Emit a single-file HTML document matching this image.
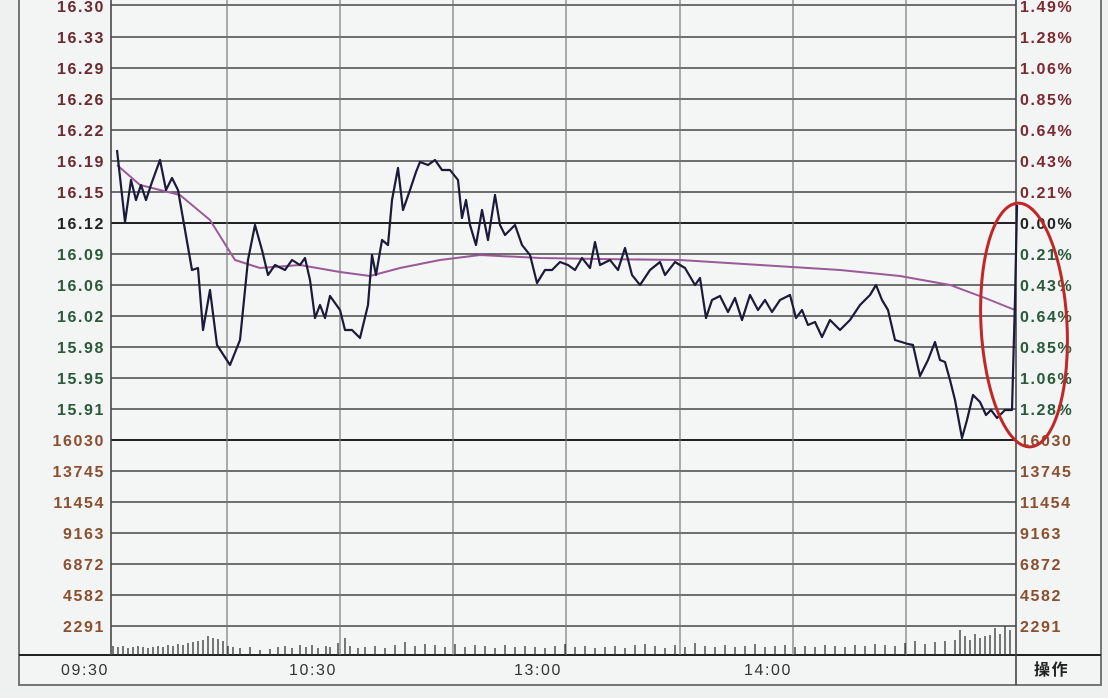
<!DOCTYPE html>
<html><head><meta charset="utf-8"><style>
body{margin:0;background:#eef0f0;}
svg{display:block}
text{font-family:"Liberation Sans","Noto Sans CJK SC",sans-serif;font-size:16px;letter-spacing:1.6px;}
</style></head><body>
<svg width="1108" height="698" viewBox="0 0 1108 698" xmlns="http://www.w3.org/2000/svg">
<rect width="1108" height="698" fill="#eff1f1"/>
<rect x="19" y="-2" width="1082" height="687" fill="#f3f4f4" stroke="#777" stroke-width="2"/>
<rect x="111" y="-2" width="905" height="657" fill="#f4f5f5"/>
<g stroke="#444" stroke-width="1.6">
<line x1="111" y1="5" x2="1016" y2="5"/><line x1="111" y1="37" x2="1016" y2="37"/><line x1="111" y1="68" x2="1016" y2="68"/><line x1="111" y1="99" x2="1016" y2="99"/><line x1="111" y1="130" x2="1016" y2="130"/><line x1="111" y1="161" x2="1016" y2="161"/><line x1="111" y1="192" x2="1016" y2="192"/><line x1="111" y1="254" x2="1016" y2="254"/><line x1="111" y1="285" x2="1016" y2="285"/><line x1="111" y1="316" x2="1016" y2="316"/><line x1="111" y1="347" x2="1016" y2="347"/><line x1="111" y1="378" x2="1016" y2="378"/><line x1="111" y1="409" x2="1016" y2="409"/><line x1="111" y1="471" x2="1016" y2="471"/><line x1="111" y1="502" x2="1016" y2="502"/><line x1="111" y1="533" x2="1016" y2="533"/><line x1="111" y1="564" x2="1016" y2="564"/><line x1="111" y1="595" x2="1016" y2="595"/><line x1="111" y1="626" x2="1016" y2="626"/>
</g>
<g stroke="#222" stroke-width="2"><line x1="111" y1="223" x2="1016" y2="223"/><line x1="111" y1="440" x2="1016" y2="440"/><line x1="19" y1="655" x2="1101" y2="655"/></g>
<g stroke="#777" stroke-width="1.2">
<line x1="227" y1="0" x2="227" y2="655"/><line x1="340" y1="0" x2="340" y2="655"/><line x1="453" y1="0" x2="453" y2="655"/><line x1="566" y1="0" x2="566" y2="655"/><line x1="680" y1="0" x2="680" y2="655"/><line x1="793" y1="0" x2="793" y2="655"/><line x1="906" y1="0" x2="906" y2="655"/>
</g>
<g stroke="#444" stroke-width="1.6"><line x1="111" y1="0" x2="111" y2="655"/><line x1="1016" y1="0" x2="1016" y2="685"/></g>
<g font-weight="bold" text-anchor="end">
<text x="105" y="12" fill="#6a2a30">16.30</text><text x="105" y="43" fill="#6a2a30">16.33</text><text x="105" y="74" fill="#6a2a30">16.29</text><text x="105" y="105" fill="#6a2a30">16.26</text><text x="105" y="136" fill="#6a2a30">16.22</text><text x="105" y="167" fill="#6a2a30">16.19</text><text x="105" y="198" fill="#6a2a30">16.15</text><text x="105" y="229" fill="#222">16.12</text>
<text x="105" y="260" fill="#2a5a3a">16.09</text><text x="105" y="291" fill="#2a5a3a">16.06</text><text x="105" y="322" fill="#2a5a3a">16.02</text><text x="105" y="353" fill="#2a5a3a">15.98</text><text x="105" y="384" fill="#2a5a3a">15.95</text><text x="105" y="415" fill="#2a5a3a">15.91</text>
<text x="105" y="446" fill="#8a5030">16030</text><text x="105" y="477" fill="#8a5030">13745</text><text x="105" y="508" fill="#8a5030">11454</text><text x="105" y="539" fill="#8a5030">9163</text><text x="105" y="570" fill="#8a5030">6872</text><text x="105" y="601" fill="#8a5030">4582</text><text x="105" y="632" fill="#8a5030">2291</text>
</g>
<g font-weight="bold">
<text x="1020" y="12" fill="#7a2a30">1.49%</text><text x="1020" y="43" fill="#7a2a30">1.28%</text><text x="1020" y="74" fill="#7a2a30">1.06%</text><text x="1020" y="105" fill="#7a2a30">0.85%</text><text x="1020" y="136" fill="#7a2a30">0.64%</text><text x="1020" y="167" fill="#7a2a30">0.43%</text><text x="1020" y="198" fill="#7a2a30">0.21%</text><text x="1020" y="229" fill="#222">0.00%</text>
<text x="1020" y="260" fill="#2a5a3a">0.21%</text><text x="1020" y="291" fill="#2a5a3a">0.43%</text><text x="1020" y="322" fill="#2a5a3a">0.64%</text><text x="1020" y="353" fill="#2a5a3a">0.85%</text><text x="1020" y="384" fill="#2a5a3a">1.06%</text><text x="1020" y="415" fill="#2a5a3a">1.28%</text>
<text x="1020" y="446" fill="#8a5030">16030</text><text x="1020" y="477" fill="#8a5030">13745</text><text x="1020" y="508" fill="#8a5030">11454</text><text x="1020" y="539" fill="#8a5030">9163</text><text x="1020" y="570" fill="#8a5030">6872</text><text x="1020" y="601" fill="#8a5030">4582</text><text x="1020" y="632" fill="#8a5030">2291</text>
</g>
<g fill="#333"><text x="61" y="675">09:30</text><text x="289" y="675">10:30</text><text x="514" y="675">13:00</text><text x="744" y="675">14:00</text><text x="1034" y="675" font-weight="bold" fill="#222">操作</text></g>
<g stroke="#333" stroke-width="1.3">
<path d="M113 655V646M118 655V647M123 655V646M128 655V648M133 655V647M138 655V646M143 655V647M148 655V648M153 655V647M158 655V646M163 655V647M168 655V645M173 655V646M178 655V644M183 655V645M188 655V643M193 655V642M198 655V641M203 655V640M208 655V636M213 655V638M218 655V639M223 655V641M228 655V646M233 655V647M240 655V648M250 655V647M260 655V650M270 655V649M278 655V647M285 655V646M292 655V648M300 655V645M306 655V647M312 655V645M318 655V648M326 655V646M330 655V647M338 655V643M345 655V638M350 655V646M358 655V648M365 655V647M375 655V646M385 655V648M395 655V645M405 655V642M415 655V646M425 655V644M435 655V645M445 655V647M455 655V644M465 655V647M475 655V645M485 655V646M495 655V648M505 655V645M515 655V647M525 655V646M535 655V647M545 655V648M555 655V646M565 655V644M575 655V647M585 655V646M595 655V648M605 655V647M615 655V646M625 655V648M635 655V645M645 655V644M655 655V646M665 655V648M675 655V645M685 655V647M695 655V643M705 655V646M715 655V647M725 655V645M735 655V647M745 655V646M755 655V644M765 655V647M775 655V646M785 655V645M795 655V647M805 655V646M815 655V647M825 655V645M835 655V646M845 655V647M855 655V645M865 655V646M875 655V644M885 655V645M895 655V646M905 655V643M915 655V641M925 655V644M935 655V642M945 655V641M955 655V640M960 655V630M965 655V636M970 655V640M975 655V634M980 655V638M985 655V636M990 655V635M995 655V628M1000 655V634M1005 655V626M1010 655V630"/>
</g>
<polyline fill="none" stroke="#9a5a9a" stroke-width="2" points="117,165 140,185 180,195 210,220 235,260 260,268 300,265 340,272 370,276 400,268 440,260 480,255 540,258 600,259 680,260 760,265 840,270 900,276 950,285 985,298 1015,310"/>
<polyline fill="none" stroke="#1a1a3a" stroke-width="2.2" stroke-linejoin="round" points="117,150 125,222 131,180 136,200 141,185 146,200 152,182 160,160 166,190 172,178 178,190 185,230 192,270 198,268 203,330 210,290 217,345 230,365 240,340 248,260 255,225 262,250 268,275 275,265 285,270 292,260 300,265 305,258 310,280 315,318 320,305 325,318 330,296 340,310 345,330 352,330 360,338 368,305 372,255 376,275 382,240 388,245 392,200 398,168 403,210 410,190 416,172 420,162 428,165 435,160 442,170 450,170 458,180 462,218 466,200 470,225 476,245 482,210 488,240 495,195 500,225 505,235 515,225 522,245 530,255 537,283 545,270 552,270 560,262 568,265 575,270 582,258 590,268 595,242 600,265 610,260 618,270 625,248 632,275 640,285 650,270 660,262 665,275 675,262 685,268 695,285 700,278 706,318 712,300 720,296 728,312 735,298 742,320 750,295 758,310 765,300 772,312 780,300 790,295 796,318 802,310 808,325 815,322 822,337 830,320 840,330 850,320 860,305 870,295 876,285 882,300 888,310 895,340 908,344 913,345 920,376 928,360 935,342 940,360 945,362 950,380 955,400 962,438 967,420 973,395 980,402 986,415 991,410 997,418 1005,410 1012,410 1015,300 1017,205"/>
<ellipse cx="1024" cy="325" rx="43" ry="122" transform="rotate(-3 1024 325)" fill="none" stroke="#c02828" stroke-width="3"/>
</svg>
</body></html>
